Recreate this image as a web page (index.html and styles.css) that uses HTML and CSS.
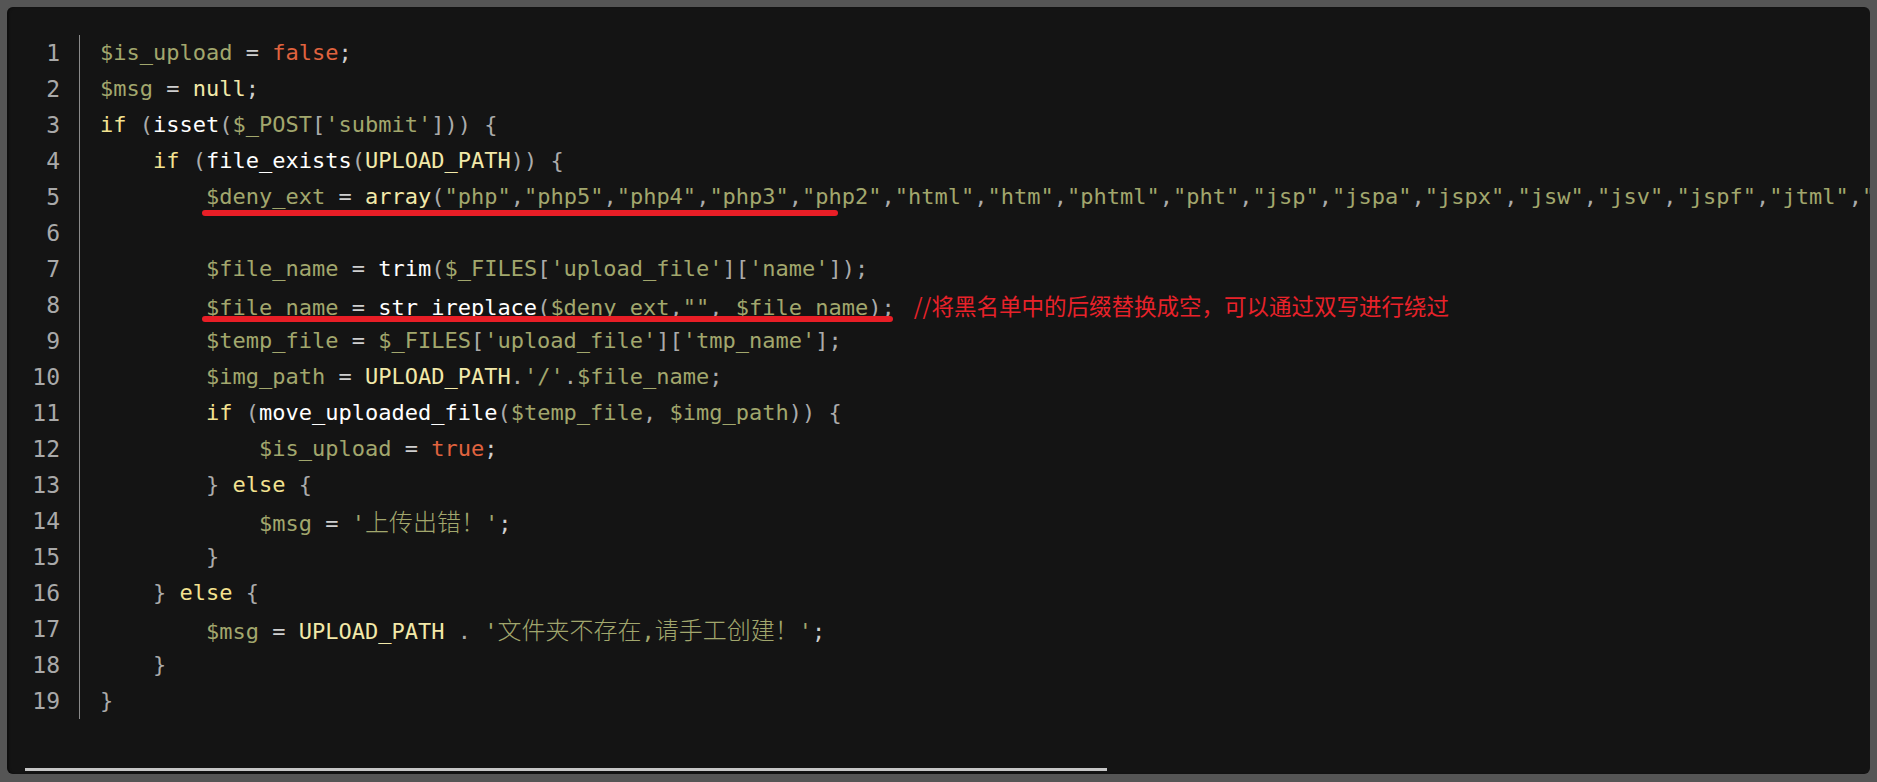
FILE: index.html
```html
<!DOCTYPE html>
<html lang="zh-CN">
<head>
<meta charset="utf-8">
<title>upload code</title>
<link rel="stylesheet" href="styles.css">
</head>
<body>
<div class="panel">
  <div class="code">
    <div class="gutter">
      <div class="ln">1</div><div class="ln">2</div><div class="ln">3</div><div class="ln">4</div><div class="ln">5</div>
      <div class="ln">6</div><div class="ln">7</div><div class="ln">8</div><div class="ln">9</div><div class="ln">10</div>
      <div class="ln">11</div><div class="ln">12</div><div class="ln">13</div><div class="ln">14</div><div class="ln">15</div>
      <div class="ln">16</div><div class="ln">17</div><div class="ln">18</div><div class="ln">19</div>
    </div>
    <div class="lines">
      <div class="line"><span class="v">$is_upload</span> <span class="o">=</span> <span class="b">false</span><span class="o">;</span></div>
      <div class="line"><span class="v">$msg</span> <span class="o">=</span> <span class="c">null</span><span class="o">;</span></div>
      <div class="line"><span class="k">if</span> <span class="p">(</span><span class="f">isset</span><span class="p">(</span><span class="v">$_POST</span><span class="p">[</span><span class="v">'submit'</span><span class="p">]))</span> <span class="p">{</span></div>
      <div class="line">    <span class="k">if</span> <span class="p">(</span><span class="f">file_exists</span><span class="p">(</span><span class="c">UPLOAD_PATH</span><span class="p">))</span> <span class="p">{</span></div>
      <div class="line">        <span class="v">$deny_ext</span> <span class="o">=</span> <span class="c">array</span><span class="p">(</span><span class="v">"php"</span><span class="p">,</span><span class="v">"php5"</span><span class="p">,</span><span class="v">"php4"</span><span class="p">,</span><span class="v">"php3"</span><span class="p">,</span><span class="v">"php2"</span><span class="p">,</span><span class="v">"html"</span><span class="p">,</span><span class="v">"htm"</span><span class="p">,</span><span class="v">"phtml"</span><span class="p">,</span><span class="v">"pht"</span><span class="p">,</span><span class="v">"jsp"</span><span class="p">,</span><span class="v">"jspa"</span><span class="p">,</span><span class="v">"jspx"</span><span class="p">,</span><span class="v">"jsw"</span><span class="p">,</span><span class="v">"jsv"</span><span class="p">,</span><span class="v">"jspf"</span><span class="p">,</span><span class="v">"jtml"</span><span class="p">,</span><span class="v">"asp"</span><span class="p">,</span><span class="v">"aspx"</span><span class="p">,</span><span class="v">"asa"</span><span class="p">,</span><span class="v">"asax"</span><span class="p">,</span><span class="v">"ascx"</span><span class="p">,</span><span class="v">"ashx"</span><span class="p">,</span><span class="v">"asmx"</span><span class="p">,</span><span class="v">"cer"</span><span class="p">,</span><span class="v">"swf"</span><span class="p">,</span><span class="v">"htaccess"</span><span class="p">,</span><span class="v">"ini"</span><span class="p">);</span></div>
      <div class="line"> </div>
      <div class="line">        <span class="v">$file_name</span> <span class="o">=</span> <span class="f">trim</span><span class="p">(</span><span class="v">$_FILES</span><span class="p">[</span><span class="v">'upload_file'</span><span class="p">][</span><span class="v">'name'</span><span class="p">]);</span></div>
      <div class="line">        <span class="v">$file_name</span> <span class="o">=</span> <span class="f">str_ireplace</span><span class="p">(</span><span class="v">$deny_ext</span><span class="p">,</span><span class="v">""</span><span class="p">,</span> <span class="v">$file_name</span><span class="p">);</span><span class="note">//将黑名单中的后缀替换成空，可以通过双写进行绕过</span></div>
      <div class="line">        <span class="v">$temp_file</span> <span class="o">=</span> <span class="v">$_FILES</span><span class="p">[</span><span class="v">'upload_file'</span><span class="p">][</span><span class="v">'tmp_name'</span><span class="p">];</span></div>
      <div class="line">        <span class="v">$img_path</span> <span class="o">=</span> <span class="c">UPLOAD_PATH</span><span class="p">.</span><span class="v">'/'</span><span class="p">.</span><span class="v">$file_name</span><span class="p">;</span></div>
      <div class="line">        <span class="k">if</span> <span class="p">(</span><span class="f">move_uploaded_file</span><span class="p">(</span><span class="v">$temp_file</span><span class="p">,</span> <span class="v">$img_path</span><span class="p">))</span> <span class="p">{</span></div>
      <div class="line">            <span class="v">$is_upload</span> <span class="o">=</span> <span class="b">true</span><span class="o">;</span></div>
      <div class="line">        <span class="p">}</span> <span class="k">else</span> <span class="p">{</span></div>
      <div class="line">            <span class="v">$msg</span> <span class="o">=</span> <span class="v">'<span class="zh">上传出错！</span>'</span><span class="o">;</span></div>
      <div class="line">        <span class="p">}</span></div>
      <div class="line">    <span class="p">}</span> <span class="k">else</span> <span class="p">{</span></div>
      <div class="line">        <span class="v">$msg</span> <span class="o">=</span> <span class="c">UPLOAD_PATH</span> <span class="p">.</span> <span class="v">'<span class="zh">文件夹不存在</span>,<span class="zh">请手工创建！</span>'</span><span class="o">;</span></div>
      <div class="line">    <span class="p">}</span></div>
      <div class="line"><span class="p">}</span></div>
    </div>
    <div class="mark mark-a"></div>
    <div class="mark mark-b"></div>
  </div>
  <div class="hscroll"><div class="thumb"></div></div>
</div>
</body>
</html>
```

FILE: styles.css
```css
html, body {
  margin: 0;
  padding: 0;
}

body {
  background: #555555;
  width: 1877px;
  height: 782px;
  overflow: hidden;
  padding: 7px 7px 8px 7px;
  box-sizing: border-box;
}

.panel {
  background: #141414;
  border-radius: 6px;
  height: 767px;
  width: 1863px;
  overflow: hidden;
  display: flex;
  flex-direction: column;
  box-sizing: border-box;
  padding-bottom: 3px;
  box-shadow: inset 2px 0 2px rgba(0, 0, 0, 0.35);
}

.code {
  position: relative;
  display: flex;
  padding-top: 28px;
  font-family: "DejaVu Sans Mono", "Liberation Mono", monospace;
  font-size: 22px;
  line-height: 36px;
  color: #c4c4c4;
}

.gutter {
  flex: 0 0 auto;
  width: 53px;
  padding-right: 19px;
  border-right: 1px solid #8a8a8a;
  text-align: right;
  color: #a9a9a9;
  font-size: 23px;
}

.ln {
  height: 36px;
}

.lines {
  flex: 1 1 auto;
  padding-left: 20px;
  min-width: 0;
}

.line {
  height: 36px;
  white-space: pre;
}

.v { color: #a2a76d; }
.o { color: #cfcfcf; }
.p { color: #ababab; }
.b { color: #e0633f; }
.c { color: #f2e9a9; }
.k { color: #f3e290; }
.f { color: #ffffff; }

.zh {
  font-family: "Noto Sans CJK SC", sans-serif;
  font-size: 24px;
  font-weight: 300;
}

.note {
  font-family: "Noto Sans CJK SC", sans-serif;
  font-size: 22.5px;
  color: #e8222a;
  margin-left: 19px;
}

.mark {
  position: absolute;
  height: 6px;
  border-radius: 3px;
  background: #e81e26;
  left: 195px;
}

.mark-a {
  top: 203px;
  width: 636px;
}

.mark-b {
  top: 309px;
  width: 691px;
}

.hscroll {
  margin-top: auto;
  padding-left: 18px;
}

.thumb {
  width: 1082px;
  height: 3px;
  background: #c6c6c6;
}
```
